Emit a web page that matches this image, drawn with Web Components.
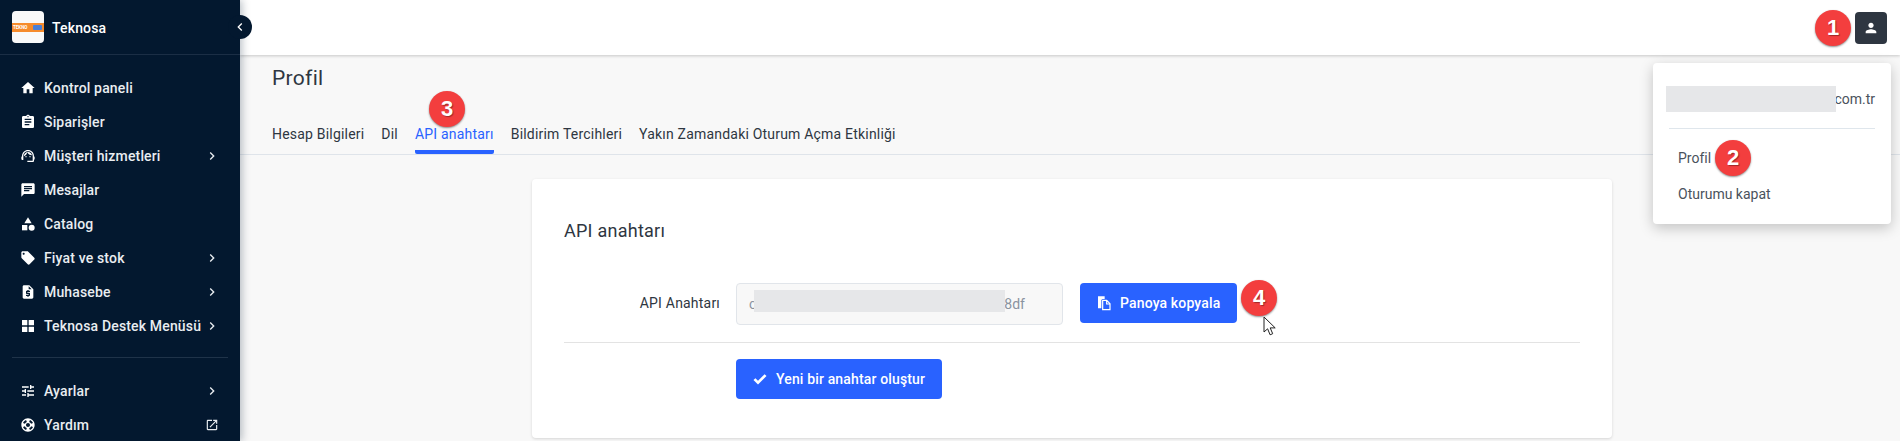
<!DOCTYPE html>
<html lang="tr">
<head>
<meta charset="utf-8">
<title>Profil</title>
<style>
  html,body{margin:0;height:100%}
  body{font-family:Roboto,"Noto Sans",sans-serif;background:#f8f8f8;overflow:hidden}
</style>
</head>
<body>
<app-shell>
  <side-bar slot="side">
    <side-item icon="home" label="Kontrol paneli"></side-item>
    <side-item icon="assignment" label="Siparişler"></side-item>
    <side-item icon="agent" label="Müşteri hizmetleri" arrow></side-item>
    <side-item icon="chat" label="Mesajlar"></side-item>
    <side-item icon="category" label="Catalog"></side-item>
    <side-item icon="offer" label="Fiyat ve stok" arrow></side-item>
    <side-item icon="quote" label="Muhasebe" arrow></side-item>
    <side-item icon="grid" label="Teknosa Destek Menüsü" arrow></side-item>
    <side-item slot="bottom" icon="tune" label="Ayarlar" arrow></side-item>
    <side-item slot="bottom" icon="support" label="Yardım" external></side-item>
  </side-bar>
  <top-bar slot="top"></top-bar>
  <profile-page slot="main"></profile-page>
  <user-menu slot="over"></user-menu>
  <step-badge slot="over" n="1" style="left:1815px;top:10px"></step-badge>
  <step-badge slot="over" n="2" style="left:1715px;top:140px"></step-badge>
  <step-badge slot="over" n="3" style="left:429px;top:91px"></step-badge>
  <step-badge slot="over" n="4" style="left:1241px;top:280px"></step-badge>
  <mouse-cursor slot="over" style="left:1263px;top:316px"></mouse-cursor>
</app-shell>

<script>
const ICONS = {
  home: '<path d="M10 20v-6h4v6h5v-8h3L12 3 2 12h3v8z"/>',
  assignment: '<path d="M19 3h-4.18C14.4 1.84 13.3 1 12 1c-1.3 0-2.4.84-2.82 2H5c-1.1 0-2 .9-2 2v14c0 1.1.9 2 2 2h14c1.1 0 2-.9 2-2V5c0-1.1-.9-2-2-2zm-7 0c.55 0 1 .45 1 1s-.45 1-1 1-1-.45-1-1 .45-1 1-1zm2 14H7v-2h7v2zm3-4H7v-2h10v2zm0-4H7V7h10v2z"/>',
  agent: '<path d="M21 12.22C21 6.73 16.74 3 12 3c-4.69 0-9 3.65-9 9.28-.6.34-1 .98-1 1.72v2c0 1.1.9 2 2 2h1v-6.1c0-3.87 3.13-7 7-7s7 3.13 7 7V19h-8v2h8c1.1 0 2-.9 2-2v-1.22c.59-.31 1-.92 1-1.64v-2.3c0-.7-.41-1.31-1-1.62z"/><circle cx="9" cy="13" r="1"/><circle cx="15" cy="13" r="1"/><path d="M18 11.03C17.52 8.18 15.04 6 12.05 6c-3.03 0-6.29 2.51-6.03 6.45 2.47-1.01 4.33-3.21 4.86-5.89 1.31 2.63 4 4.44 7.12 4.47z"/>',
  chat: '<path d="M20 2H4c-1.1 0-1.99.9-1.99 2L2 22l4-4h14c1.1 0 2-.9 2-2V4c0-1.1-.9-2-2-2zM6 9h12v2H6V9zm8 5H6v-2h8v2zm4-6H6V6h12v2z"/>',
  category: '<path d="M12 2l-5.5 9h11z"/><circle cx="17.5" cy="17.5" r="4.5"/><path d="M3 13.5h8v8H3z"/>',
  offer: '<path d="M21.41 11.58l-9-9C12.05 2.22 11.55 2 11 2H4c-1.1 0-2 .9-2 2v7c0 .55.22 1.05.59 1.42l9 9c.36.36.86.58 1.41.58.55 0 1.05-.22 1.41-.59l7-7c.37-.36.59-.86.59-1.41 0-.55-.23-1.06-.59-1.42zM5.5 7C4.67 7 4 6.33 4 5.5S4.67 4 5.5 4 7 4.67 7 5.5 6.33 7 5.5 7z"/>',
  quote: '<path d="M14 2H6c-1.1 0-1.99.9-1.99 2L4 20c0 1.1.89 2 1.99 2H18c1.1 0 2-.9 2-2V8l-6-6zm1 10h-4v1h3c.55 0 1 .45 1 1v3c0 .55-.45 1-1 1h-1v1h-2v-1H9v-2h4v-1h-3c-.55 0-1-.45-1-1v-3c0-.55.45-1 1-1h1V9h2v1h2v2zm-2-4V3.5L17.5 8H13z"/>',
  grid: '<rect x="3" y="3" width="8" height="8" rx=".5"/><rect x="13" y="3" width="8" height="8" rx=".5"/><rect x="3" y="13" width="8" height="8" rx=".5"/><rect x="13" y="13" width="8" height="8" rx=".5"/>',
  tune: '<path d="M3 17v2h6v-2H3zM3 5v2h10V5H3zm10 16v-2h8v-2h-8v-2h-2v6h2zM7 9v2H3v2h4v2h2V9H7zm14 4v-2H11v2h10zm-6-4h2V7h4V5h-4V3h-2v6z"/>',
  support: '<path d="M12 2C6.48 2 2 6.48 2 12s4.48 10 10 10 10-4.48 10-10S17.52 2 12 2zm7.46 7.12l-2.78 1.15c-.51-1.36-1.58-2.44-2.95-2.94l1.15-2.78c2.1.8 3.77 2.47 4.58 4.57zM12 15c-1.66 0-3-1.34-3-3s1.34-3 3-3 3 1.34 3 3-1.34 3-3 3zM9.13 4.54l1.17 2.78c-1.38.5-2.47 1.59-2.98 2.97L4.54 9.13c.81-2.11 2.48-3.78 4.59-4.59zM4.54 14.87l2.78-1.15c.51 1.38 1.59 2.46 2.97 2.96l-1.17 2.78c-2.1-.81-3.77-2.48-4.58-4.59zm10.34 4.59l-1.15-2.78c1.37-.51 2.45-1.59 2.95-2.97l2.78 1.17c-.81 2.1-2.48 3.77-4.58 4.58z"/>',
  external: '<path d="M19 19H5V5h7V3H5c-1.11 0-2 .9-2 2v14c0 1.1.89 2 2 2h14c1.1 0 2-.9 2-2v-7h-2v7zM14 3v2h3.59l-9.83 9.83 1.41 1.41L19 6.41V10h2V3h-7z"/>',
  chevron: '<path d="M10 6L8.59 7.41 13.17 12l-4.58 4.59L10 18l6-6z"/>',
  person: '<path d="M12 12c2.21 0 4-1.79 4-4s-1.79-4-4-4-4 1.79-4 4 1.79 4 4 4zm0 2c-2.67 0-8 1.34-8 4v2h16v-2c0-2.66-5.33-4-8-4z"/>',
  check: '<path d="M9 20.4L2.2 13.6l2.9-2.9L9 14.6 18.9 4.7l2.9 2.9z"/>',
  copy: '<path d="M3 2h10v4H9.5L8 7.5V20H3z"/><path d="M10 8h6l5 5v9H10zM16 9v4.5h4.5" fill="none" stroke="currentColor" stroke-width="1.8"/>'
};
const svg = (name, size) => `<svg viewBox="0 0 24 24" width="${size}" height="${size}" fill="currentColor" aria-hidden="true">${ICONS[name]}</svg>`;

class AppShell extends HTMLElement {
  constructor() { super(); this.attachShadow({ mode: "open" }); }
  connectedCallback() {
    this.shadowRoot.innerHTML = `
      <style>
        :host{display:grid;grid-template-columns:240px 1fr;grid-template-rows:55px 1fr;width:1900px;height:441px;position:relative;overflow:hidden}
        .side{grid-row:1 / 3;display:flex;min-height:0;position:relative;z-index:3;box-shadow:2px 0 8px rgba(3,24,47,.28)}
        .top{display:block;position:relative;z-index:2}
        .main{min-width:0;min-height:0;overflow:hidden}
        ::slotted(*){flex:1}
      </style>
      <div class="side"><slot name="side"></slot></div>
      <div class="top"><slot name="top"></slot></div>
      <div class="main"><slot name="main"></slot></div>
      <slot name="over"></slot>`;
  }
}

class SideBar extends HTMLElement {
  constructor() { super(); this.attachShadow({ mode: "open" }); }
  connectedCallback() {
    this.shadowRoot.innerHTML = `
      <style>
        :host{display:flex;flex-direction:column;background:#03182f;color:#fff;position:relative;width:240px;height:441px}
        .brand{height:54px;display:flex;align-items:center;gap:8px;padding:0 12px 0;border-bottom:1px solid #1b2e45;flex:none}
        .logo{width:32px;height:32px;background:#f9f9f9;border-radius:4px;display:flex;align-items:center;overflow:hidden}
        .band{flex:1;height:9px;background:#f68b2c;color:#fff;font:700 4.5px/9px Roboto,sans-serif;padding-left:1px;white-space:nowrap;display:flex;align-items:center;justify-content:space-between;padding-right:2px}
        .band i{width:9px;height:5px;background:#4a7fd6;border-radius:1px}
        .name{font-size:14px;font-weight:500;letter-spacing:.15px;padding-top:1px}
        .nav{padding-top:16px;display:flex;flex-direction:column}
        hr{border:0;border-top:1px solid #1f3349;margin:14px 12px 16px}
        .toggle{position:absolute;left:228px;top:15px;width:24px;height:24px;border-radius:50%;background:#03182f;display:flex;align-items:center;justify-content:center;color:#fff}
      </style>
      <div class="brand">
        <div class="logo"><div class="band">TEKNO<i></i></div></div>
        <div class="name">Teknosa</div>
      </div>
      <div class="nav"><slot></slot></div>
      <hr>
      <div class="nav" style="padding-top:0"><slot name="bottom"></slot></div>
      <div class="toggle"><svg viewBox="0 0 24 24" width="16" height="16" fill="currentColor" style="transform:scaleX(-1)">${ICONS.chevron}</svg></div>`;
  }
}

class SideItem extends HTMLElement {
  constructor() { super(); this.attachShadow({ mode: "open" }); }
  connectedCallback() {
    const end = this.hasAttribute("arrow") ? svg("chevron", 16) : this.hasAttribute("external") ? svg("external", 14) : "";
    this.shadowRoot.innerHTML = `
      <style>
        :host{display:flex;align-items:center;height:34px;padding:0 20px;color:#e9edf1;font-size:14px;font-weight:500;letter-spacing:.16px}
        .ic{width:16px;height:16px;margin-right:8px;flex:none;display:flex;color:#fff}
        .lb{flex:1;white-space:nowrap}
        .end{width:16px;display:flex;justify-content:center;color:#e9edf1;margin-left:-6px;flex:none}
      </style>
      <span class="ic">${svg(this.getAttribute("icon"), 16)}</span>
      <span class="lb">${this.getAttribute("label")}</span>
      <span class="end">${end}</span>`;
  }
}

class TopBar extends HTMLElement {
  constructor() { super(); this.attachShadow({ mode: "open" }); }
  connectedCallback() {
    this.shadowRoot.innerHTML = `
      <style>
        :host{display:flex;justify-content:flex-end;align-items:center;height:55px;background:#fff;box-shadow:0 1px 3px rgba(0,0,0,.2);padding-right:13px;box-sizing:border-box}
        .btn{width:32px;height:32px;border-radius:4px;background:#2e3641;color:#fff;display:flex;align-items:center;justify-content:center}
      </style>
      <div class="btn">${svg("person", 16)}</div>`;
  }
}

class ProfilePage extends HTMLElement {
  constructor() { super(); this.attachShadow({ mode: "open" }); }
  connectedCallback() {
    this.shadowRoot.innerHTML = `
      <style>
        :host{display:block;height:386px;overflow:hidden;color:#2e3641}
        h1{margin:0;padding:9px 32px 0;font-size:21px;font-weight:400;line-height:28px;letter-spacing:.3px}
        .tabs{display:flex;gap:17px;padding:0 32px;margin-top:21px;border-bottom:1px solid #dfe4ea;height:42px;box-sizing:border-box}
        .tab{font-size:14px;line-height:20px;padding-top:11px;white-space:nowrap;box-sizing:border-box;height:41px;letter-spacing:.2px;color:#2e3641}
        .tab.on{color:#2962ff;border-bottom:4px solid #2962ff;border-radius:0 0 2px 2px}
        .wrap{display:flex;justify-content:center;padding:24px 0 0 4px}
      </style>
      <h1>Profil</h1>
      <div class="tabs">
        <div class="tab">Hesap Bilgileri</div>
        <div class="tab">Dil</div>
        <div class="tab on">API anahtarı</div>
        <div class="tab">Bildirim Tercihleri</div>
        <div class="tab">Yakın Zamandaki Oturum Açma Etkinliği</div>
      </div>
      <div class="wrap"><api-card></api-card></div>`;
  }
}

class ApiCard extends HTMLElement {
  constructor() { super(); this.attachShadow({ mode: "open" }); }
  connectedCallback() {
    this.shadowRoot.innerHTML = `
      <style>
        :host{display:block;width:1016px;height:195px;padding:32px;background:#fff;border-radius:4px;box-shadow:0 1px 3px rgba(0,0,0,.14);color:#2e3641}
        h2{margin:8px 0 0;font-size:18px;font-weight:400;line-height:24px;letter-spacing:.25px}
        .row{display:grid;grid-template-columns:156px 327px auto;column-gap:16px;align-items:start;margin-top:40px;padding-bottom:17px;border-bottom:1px solid #e3e3e3}
        label{font-size:14px;text-align:right;line-height:40px;letter-spacing:.2px}
        .field{height:42px;box-sizing:border-box;border:1px solid #e1e5ea;border-radius:4px;background:#f8f8f8;color:#8a93a0;font-size:14px;line-height:40px;padding:0 37px 0 12px;display:flex;justify-content:space-between;position:relative}
        .mask{position:absolute;left:17px;top:6px;width:251px;height:22px;background:#e6e7e9}
        .actions{padding:16px 0 0 172px}
        .btn{display:inline-flex;align-items:center;gap:8px;height:40px;padding:0 17px 0 16px;box-sizing:border-box;border-radius:4px;background:#2962ff;color:#fff;font-size:14px;font-weight:500;white-space:nowrap;letter-spacing:.15px}
        .row .btn{margin-left:1px;justify-self:start}
      </style>
      <h2>API anahtarı</h2>
      <div class="row">
        <label>API Anahtarı</label>
        <div class="field"><span>c</span><span>8df</span><i class="mask"></i></div>
        <div class="btn">${svg("copy", 16)}Panoya kopyala</div>
      </div>
      <div class="actions"><div class="btn">${svg("check", 16)}Yeni bir anahtar oluştur</div></div>`;
  }
}

class UserMenu extends HTMLElement {
  constructor() { super(); this.attachShadow({ mode: "open" }); }
  connectedCallback() {
    this.shadowRoot.innerHTML = `
      <style>
        :host{position:absolute;left:1653px;top:63px;width:238px;height:161px;box-sizing:border-box;background:#fff;border-radius:4px;box-shadow:0 4px 14px rgba(0,0,0,.22);padding:23px 16px 0;color:#4a525c;font-size:14px;z-index:4}
        .mail{display:flex;justify-content:flex-end;align-items:center;height:26px;padding-top:0;position:relative;color:#4a525c}
        .mask{position:absolute;left:-3px;top:0;width:170px;height:26px;background:#e6e7e9}
        hr{border:0;border-top:1px solid #dfe6ec;margin:16px 0 0}
        .link{padding-left:9px;line-height:20px}
      </style>
      <div class="mail"><i class="mask"></i>com.tr</div>
      <hr>
      <div class="link" style="margin-top:19px">Profil</div>
      <div class="link" style="margin-top:16px">Oturumu kapat</div>`;
  }
}

class StepBadge extends HTMLElement {
  constructor() { super(); this.attachShadow({ mode: "open" }); }
  connectedCallback() {
    this.shadowRoot.innerHTML = `
      <style>
        :host{position:absolute;width:36px;height:36px;border-radius:50%;background:#f33e3e;box-shadow:0 1px 2px rgba(0,0,0,.45);color:#fff;font:700 22px/36px "Liberation Sans",Arial,sans-serif;text-align:center;text-shadow:1px 1px 1px rgba(0,0,0,.35);z-index:5}
      </style>${this.getAttribute("n")}`;
  }
}

class MouseCursor extends HTMLElement {
  constructor() { super(); this.attachShadow({ mode: "open" }); }
  connectedCallback() {
    this.shadowRoot.innerHTML = `
      <style>:host{position:absolute;width:13px;height:20px;z-index:6}</style>
      <svg viewBox="0 0 13 20" width="13" height="20"><path d="M1 1v15l3.6-3.2 2.5 6 2.6-1.1-2.5-5.8h5z" fill="#fff" stroke="#222" stroke-width="1" stroke-linejoin="round"/></svg>`;
  }
}

customElements.define("app-shell", AppShell);
customElements.define("side-bar", SideBar);
customElements.define("side-item", SideItem);
customElements.define("top-bar", TopBar);
customElements.define("profile-page", ProfilePage);
customElements.define("api-card", ApiCard);
customElements.define("user-menu", UserMenu);
customElements.define("step-badge", StepBadge);
customElements.define("mouse-cursor", MouseCursor);
</script>
</body>
</html>
